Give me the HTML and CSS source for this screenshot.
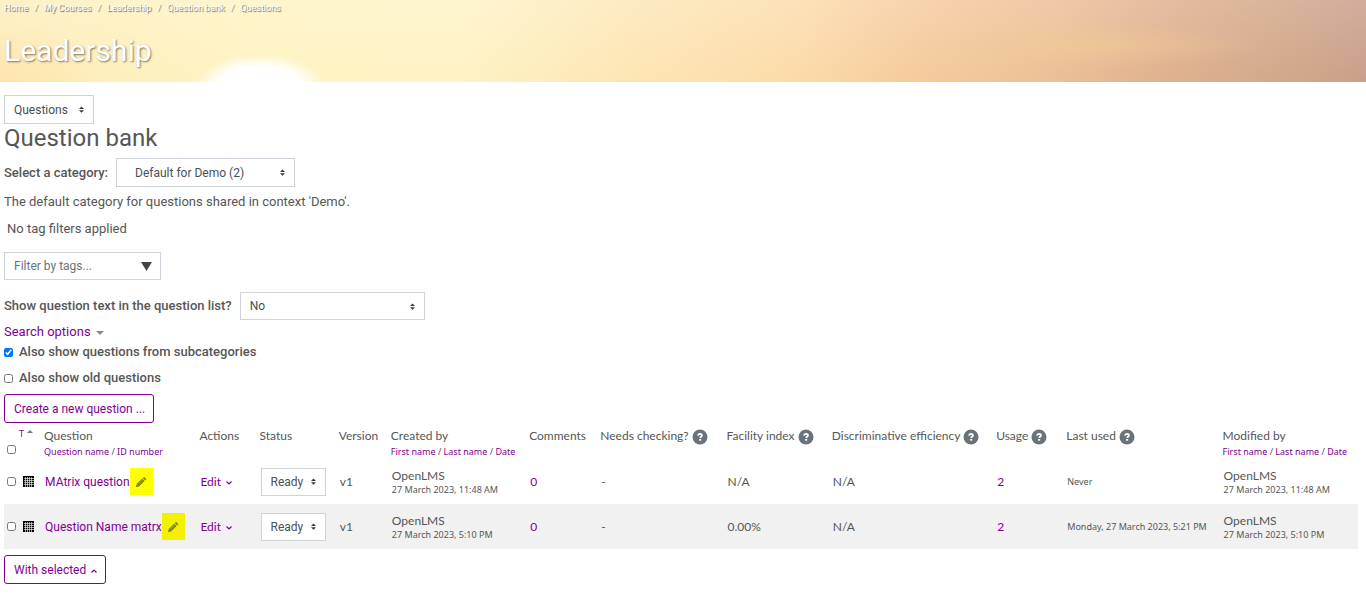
FILE: index.html
```html
<!DOCTYPE html>
<html lang="en">
<head>
  <meta charset="UTF-8">
  <meta name="viewport" content="width=device-width, initial-scale=1.0">
  <title>Leadership: Question bank</title>
  <link rel="stylesheet" href="styles.css">
</head>
<body>
  <!-- shared icons -->
  <svg class="sprite" aria-hidden="true">
    <symbol id="grid" viewBox="0 0 11 11">
      <path fill="#000" d="M0 0h11v11H0z"/>
      <path stroke="#fff" stroke-width="1" stroke-opacity=".6" d="M2.5 1v10M4.5 1v10M6.5 1v10M8.5 1v10M1 2.5h10M1 4.5h10M1 6.5h10M1 8.5h10"/>
    </symbol>
    <symbol id="help" viewBox="0 0 16 16">
      <circle cx="8" cy="8" r="7.5" fill="#6a737b"/>
      <path d="M6 6.600C6.200 5.400 7 5 8 5c1.100 0 1.900.6 1.900 1.500C9.900 7.700 8.200 7.700 8.200 9" fill="none" stroke="#fff" stroke-width="1.800"/>
      <path d="M7.200 10h2v1.700h-2z" fill="#fff"/>
    </symbol>
    <symbol id="pencil" viewBox="0 0 12 12">
      <path d="M9 .8 11.400 3.200 10.200 4.400 7.800 2zM7.200 2.600 9.600 5 4 10.400 .8 11.300 1.700 8z"/>
      <path d="M3.200 8.200 7.500 4" stroke="#ff0" stroke-opacity=".45" stroke-width=".7"/>
    </symbol>
  </svg>

  <header class="page-header">
    <nav class="breadcrumb" aria-label="Breadcrumb">
      <a href="#">Home</a><span>/</span>
      <a href="#">My Courses</a><span>/</span>
      <a href="#">Leadership</a><span>/</span>
      <a href="#">Question bank</a><span>/</span>
      <a href="#">Questions</a>
    </nav>
    <h1>Leadership</h1>
  </header>

  <main>
    <select class="select select-nav" aria-label="Question bank navigation">
      <option>Questions</option>
    </select>

    <h2>Question bank</h2>

    <div class="field category">
      <label for="category">Select a category:</label>
      <select class="select select-category" id="category">
        <option>Default for Demo (2)</option>
      </select>
    </div>
    <p class="description">The default category for questions shared in context 'Demo'.</p>

    <p class="no-filters">No tag filters applied</p>
    <div class="tag-filter">
      <input type="text" placeholder="Filter by tags..." aria-label="Filter by tags">
      <svg width="11" height="9" viewBox="0 0 11 9" aria-hidden="true"><path d="M0 0h11L5.500 9z" fill="#444"/></svg>
    </div>

    <div class="field show-text">
      <label for="qtext">Show question text in the question list?</label>
      <select class="select select-text" id="qtext">
        <option>No</option>
      </select>
    </div>

    <a class="search-options" href="#">Search options
      <svg width="8" height="4" viewBox="0 0 8 4" aria-hidden="true"><path d="M0 0h8L4 4z" fill="#888"/></svg>
    </a>
    <div class="check">
      <input type="checkbox" id="subcats" checked>
      <label for="subcats">Also show questions from subcategories</label>
    </div>
    <div class="check">
      <input type="checkbox" id="old">
      <label for="old">Also show old questions</label>
    </div>

    <button class="btn" type="button">Create a new question ...</button>

    <table class="questions">
      <colgroup>
        <col class="c-check"><col class="c-type"><col class="c-question"><col class="c-actions"><col class="c-status">
        <col class="c-version"><col class="c-person"><col class="c-comments"><col class="c-needs"><col class="c-facility">
        <col class="c-disc"><col class="c-usage"><col class="c-used"><col class="c-person">
      </colgroup>
      <thead>
        <tr>
          <th class="th-check"><input type="checkbox" aria-label="Select all"></th>
          <th class="th-type"><a href="#">T<svg width="6" height="3" viewBox="0 0 6 3" aria-hidden="true"><path d="M3 0l3 3H0z" fill="#777"/></svg></a></th>
          <th>Question<div class="sorters"><a href="#">Question name</a> / <a href="#">ID number</a></div></th>
          <th>Actions</th>
          <th>Status</th>
          <th>Version</th>
          <th>Created by<div class="sorters"><a href="#">First name</a> / <a href="#">Last name</a> / <a href="#">Date</a></div></th>
          <th>Comments</th>
          <th>Needs checking? <svg class="help"><use href="#help"/></svg></th>
          <th>Facility index <svg class="help"><use href="#help"/></svg></th>
          <th>Discriminative efficiency <svg class="help"><use href="#help"/></svg></th>
          <th>Usage <svg class="help"><use href="#help"/></svg></th>
          <th>Last used <svg class="help"><use href="#help"/></svg></th>
          <th>Modified by<div class="sorters"><a href="#">First name</a> / <a href="#">Last name</a> / <a href="#">Date</a></div></th>
        </tr>
      </thead>
      <tbody>
        <tr>
          <td><input type="checkbox" aria-label="Select MAtrix question"></td>
          <td class="type"><svg class="grid"><use href="#grid"/></svg></td>
          <td><div class="name-box"><a href="#">MAtrix question</a><a class="quick-edit" href="#" aria-label="Edit question name"><svg><use href="#pencil"/></svg></a></div></td>
          <td><a href="#">Edit <svg class="chevron" viewBox="0 0 6 4"><path d="M.5.5 3 3 5.500.5"/></svg></a></td>
          <td><select class="select select-status" aria-label="Status"><option>Ready</option></select></td>
          <td>v1</td>
          <td>OpenLMS<div class="date">27 March 2023, 11:48 AM</div></td>
          <td><a href="#">0</a></td>
          <td>-</td>
          <td>N/A</td>
          <td>N/A</td>
          <td><a href="#">2</a></td>
          <td class="date">Never</td>
          <td>OpenLMS<div class="date">27 March 2023, 11:48 AM</div></td>
        </tr>
        <tr>
          <td><input type="checkbox" aria-label="Select Question Name matrx"></td>
          <td class="type"><svg class="grid"><use href="#grid"/></svg></td>
          <td><div class="name-box"><a href="#">Question Name matrx</a><a class="quick-edit" href="#" aria-label="Edit question name"><svg><use href="#pencil"/></svg></a></div></td>
          <td><a href="#">Edit <svg class="chevron" viewBox="0 0 6 4"><path d="M.5.5 3 3 5.500.5"/></svg></a></td>
          <td><select class="select select-status" aria-label="Status"><option>Ready</option></select></td>
          <td>v1</td>
          <td>OpenLMS<div class="date">27 March 2023, 5:10 PM</div></td>
          <td><a href="#">0</a></td>
          <td>-</td>
          <td>0.00%</td>
          <td>N/A</td>
          <td><a href="#">2</a></td>
          <td class="date">Monday, 27 March 2023, 5:21 PM</td>
          <td>OpenLMS<div class="date">27 March 2023, 5:10 PM</div></td>
        </tr>
      </tbody>
    </table>

    <button class="btn" type="button">With selected <svg class="chevron" viewBox="0 0 6 4"><path d="M.5 3.500 3 1 5.500 3.500"/></svg></button>
  </main>
</body>
</html>
```

FILE: styles.css
```css
* {
  box-sizing: border-box;
}

body {
  margin: 0;
  font-family: Roboto, "Liberation Sans", sans-serif;
  font-size: 13px;
  line-height: 20px;
  color: #565656;
  background-color: #fff;
}

a {
  color: #7f0093;
  text-decoration: none;
}

.sprite {
  display: none;
}

.page-header {
  height: 82px;
  padding: 0 4px;
  color: #fff;
  background:
    radial-gradient(ellipse 60px 31px at 260px 88px, #fff 70%, rgba(255, 255, 255, 0) 110%),
    radial-gradient(ellipse 110px 60px at 0 100%, rgba(255, 220, 160, 0.5), rgba(255, 220, 160, 0)),
    radial-gradient(ellipse 170px 22px at 80% 55%, rgba(242, 200, 150, 0.6), rgba(242, 200, 150, 0)),
    linear-gradient(to bottom, rgba(255, 248, 225, 0.2), rgba(255, 220, 130, 0.1)),
    linear-gradient(100deg, #fdeebf 0, #fef5c8 18%, #fef5cb 34%, #fde7ba 46%, #fbdcae 58%, #f5c9a0 67%, #ebbd98 77%, #dbab8e 86%, #cfa38b 93%, #c4988a 100%);
}

.breadcrumb {
  display: flex;
  gap: 6px;
  padding-top: 2px;
  font-size: 9px;
  line-height: 12px;
  text-shadow: 1px 1px 1px rgba(0, 0, 0, 0.6);
}

.breadcrumb a {
  color: #fff;
}

h1 {
  margin: 19px 0 0;
  font-size: 30px;
  font-weight: 400;
  line-height: 36px;
  text-shadow: 1px 1px 2px rgba(0, 0, 0, 0.5);
}

main {
  display: flex;
  flex-direction: column;
  align-items: flex-start;
  padding: 13px 8px 12px 4px;
}

h2 {
  margin: 0 0 6px;
  font-size: 24px;
  font-weight: 400;
  line-height: 28px;
}

p {
  margin: 0;
}

.select {
  appearance: none;
  height: 29px;
  padding: 0 20px 0 9px;
  border: 1px solid #ced4da;
  border-radius: 0;
  color: #495057;
  font-family: inherit;
  font-size: 12px;
  background: #fff url("data:image/svg+xml,%3Csvg xmlns='http://www.w3.org/2000/svg' viewBox='0 0 4 5'%3E%3Cpath fill='%23343a40' d='M2 0L0 2h4zm0 5L0 3h4z'/%3E%3C/svg%3E") no-repeat right 9px center / 5px 7px;
}

.select-nav {
  width: 90px;
}

.select-category {
  width: 179px;
  padding-left: 18px;
}

.select-text {
  width: 185px;
  height: 28px;
}

.select-status {
  display: block;
  width: 65px;
  height: 28px;
  padding-right: 16px;
  font-family: Roboto, sans-serif;
}

.field {
  display: flex;
  align-items: center;
}

.field label,
.check label {
  font-weight: 500;
}

.category {
  gap: 8px;
}

.description {
  margin-top: 5px;
}

.no-filters {
  margin: 7px 0 13px;
  padding-left: 3px;
}

.tag-filter {
  display: flex;
  align-items: center;
  width: 157px;
  height: 28px;
  padding: 0 8px 0 9px;
  border: 1px solid #ced4da;
}

.tag-filter input {
  flex: 1;
  min-width: 0;
  padding: 0;
  border: none;
  font-family: inherit;
  font-size: 12px;
}

.tag-filter input::placeholder {
  color: #6a737b;
}

.show-text {
  gap: 8px;
  margin: 12px 0 2px;
}

.search-options svg {
  margin-left: 2px;
  vertical-align: 1px;
}

input[type="checkbox"] {
  width: 9px;
  height: 9px;
  margin: 0;
}

.check {
  display: flex;
  align-items: center;
  gap: 6px;
  margin-bottom: 6px;
}

.btn {
  height: 29px;
  padding: 0 8px 0 9px;
  border: 1px solid #7f0093;
  border-radius: 3px;
  background: #fff;
  color: #7f0093;
  font-family: inherit;
  font-size: 12px;
}

.chevron {
  width: 6px;
  height: 4px;
  margin-left: 2px;
  vertical-align: 1px;
  fill: none;
  stroke: #7f0093;
  stroke-width: 1.2;
}

.questions {
  width: 100%;
  margin: 4px 0 6px;
  border-collapse: collapse;
  table-layout: fixed;
  font-family: Lato, "Open Sans", sans-serif;
  font-size: 12px;
  line-height: 16px;
  white-space: nowrap;
}

.c-check { width: 15px; }
.c-type { width: 22px; }
.c-question { width: 155px; }
.c-actions { width: 60px; }
.c-status { width: 79px; }
.c-version { width: 52px; }
.c-person { width: 138px; }
.c-comments { width: 71px; }
.c-needs { width: 126px; }
.c-facility { width: 105px; }
.c-disc { width: 164px; }
.c-usage { width: 70px; }
.c-used { width: 156px; }

th {
  height: 32px;
  padding: 1px 3px 0;
  font-weight: 400;
  text-align: left;
  vertical-align: top;
}

td {
  height: 45px;
  padding: 0 3px 0 4px;
  vertical-align: middle;
}

td:first-child {
  padding-left: 3px;
}

tbody tr:nth-child(even) {
  background-color: #f1f1f1;
}

td input[type="checkbox"],
th input[type="checkbox"] {
  display: block;
}

.th-check {
  padding-bottom: 5px;
  vertical-align: bottom;
}

.th-type {
  padding-left: 0;
  font-family: "Noto Sans", sans-serif;
  font-size: 9px;
  line-height: 12px;
}

.th-type svg {
  margin-left: 3px;
  vertical-align: 4px;
}

.type {
  padding-left: 4px;
}

.grid {
  display: block;
  width: 11px;
  height: 11px;
}

.sorters,
.date {
  font-family: "Noto Sans", "Open Sans", sans-serif;
  font-size: 9px;
  line-height: 12px;
}

.sorters {
  margin-top: 2px;
}

.help {
  width: 16px;
  height: 16px;
  vertical-align: -5px;
}

.name-box {
  display: flex;
  align-items: center;
  font-family: Roboto, sans-serif;
}

.quick-edit {
  display: flex;
  align-items: center;
  justify-content: center;
  width: 23px;
  height: 27px;
  background-color: #ff0;
}

tr:nth-child(even) .quick-edit {
  background-color: #f1f100;
}

.quick-edit svg {
  width: 12px;
  height: 12px;
  fill: #858500;
}
```
